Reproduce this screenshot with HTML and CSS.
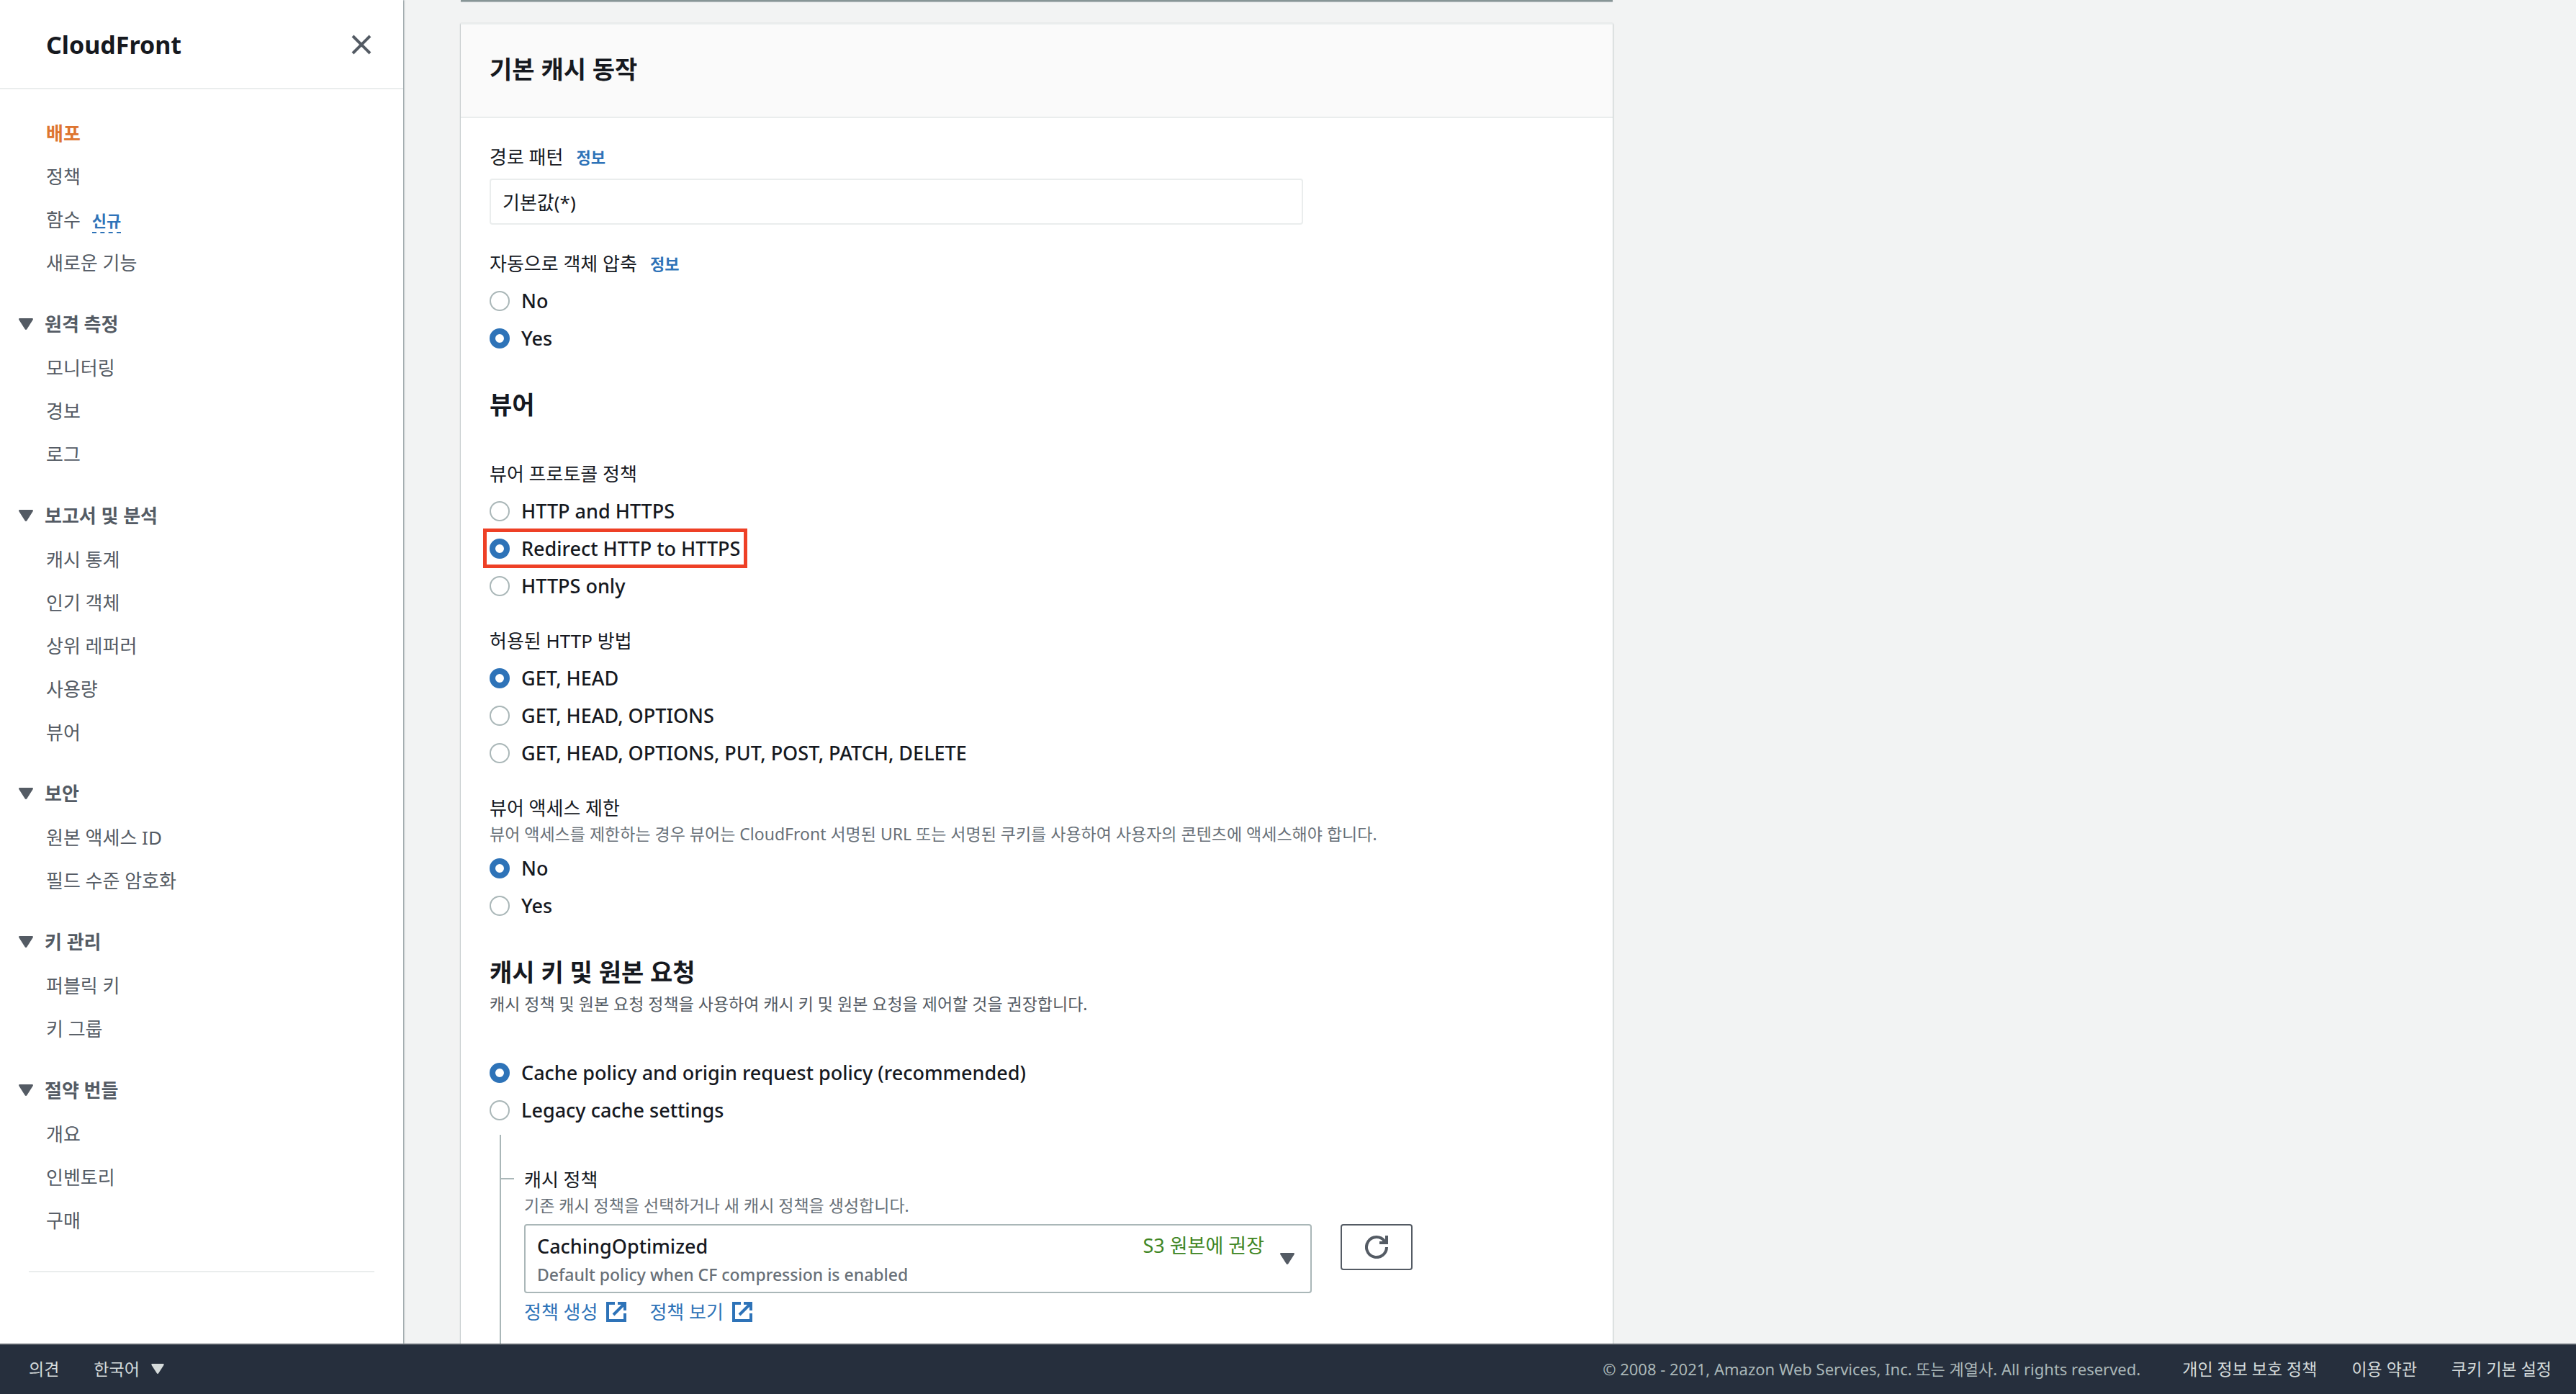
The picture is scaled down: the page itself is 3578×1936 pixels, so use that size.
FILE: index.html
```html
<!DOCTYPE html>
<html lang="ko">
<head>
<meta charset="utf-8">
<meta name="viewport" content="width=device-width, initial-scale=1">
<title>CloudFront</title>
<link rel="stylesheet" href="styles.css">
</head>
<body>
<svg class="sprite" aria-hidden="true">
  <symbol id="caret" viewBox="0 0 20 16"><path d="M1.500 0h17c1.300 0 1.800 1.200 1.100 2.200l-8.300 13c-.6 1-2 1-2.600 0l-8.300-13C-.3 1.200.2 0 1.500 0z" fill="currentColor"/></symbol>
  <symbol id="external" viewBox="0 0 28 28"><path d="M12 2H2v24h24V16M16 2h10v10M25 3 10 18" fill="none" stroke="currentColor" stroke-width="4"/></symbol>
</svg>
<div class="app">
  <aside class="sidebar">
    <header class="sidebar-head">
      <h1 class="service">CloudFront</h1>
      <button class="close" type="button" aria-label="닫기"><svg width="28" height="28" viewBox="0 0 28 28"><path d="M2 2 26 26M26 2 2 26" stroke="currentColor" stroke-width="4"/></svg></button>
    </header>
    <nav class="nav">
      <ul class="links">
        <li><a class="active" href="#">배포</a></li>
        <li><a href="#">정책</a></li>
        <li><a href="#">함수</a><button class="badge" type="button">신규</button></li>
        <li><a href="#">새로운 기능</a></li>
      </ul>
      <button class="group" type="button"><svg class="caret"><use href="#caret"/></svg>원격 측정</button>
      <ul class="links">
        <li><a href="#">모니터링</a></li>
        <li><a href="#">경보</a></li>
        <li><a href="#">로그</a></li>
      </ul>
      <button class="group" type="button"><svg class="caret"><use href="#caret"/></svg>보고서 및 분석</button>
      <ul class="links">
        <li><a href="#">캐시 통계</a></li>
        <li><a href="#">인기 객체</a></li>
        <li><a href="#">상위 레퍼러</a></li>
        <li><a href="#">사용량</a></li>
        <li><a href="#">뷰어</a></li>
      </ul>
      <button class="group" type="button"><svg class="caret"><use href="#caret"/></svg>보안</button>
      <ul class="links">
        <li><a href="#">원본 액세스 ID</a></li>
        <li><a href="#">필드 수준 암호화</a></li>
      </ul>
      <button class="group" type="button"><svg class="caret"><use href="#caret"/></svg>키 관리</button>
      <ul class="links">
        <li><a href="#">퍼블릭 키</a></li>
        <li><a href="#">키 그룹</a></li>
      </ul>
      <button class="group" type="button"><svg class="caret"><use href="#caret"/></svg>절약 번들</button>
      <ul class="links">
        <li><a href="#">개요</a></li>
        <li><a href="#">인벤토리</a></li>
        <li><a href="#">구매</a></li>
      </ul>
      <hr class="rule">
    </nav>
  </aside>

  <main class="main">
    <div class="card-end"></div>
    <section class="card">
      <header class="card-head"><h2 class="heading">기본 캐시 동작</h2></header>
      <form class="card-body">
        <div class="field text-field">
          <div class="label"><label for="path">경로 패턴</label><a class="info" href="#">정보</a></div>
          <input class="text" id="path" type="text" value="기본값(*)" readonly>
        </div>
        <fieldset class="field">
          <legend class="label">자동으로 객체 압축<a class="info" href="#">정보</a></legend>
          <div class="radios">
            <label><input type="radio" name="compress"><span>No</span></label>
            <label><input type="radio" name="compress" checked><span>Yes</span></label>
          </div>
        </fieldset>

        <h3 class="heading sub">뷰어</h3>
        <fieldset class="field after-heading">
          <legend class="label">뷰어 프로토콜 정책</legend>
          <div class="radios">
            <label><input type="radio" name="protocol"><span>HTTP and HTTPS</span></label>
            <label class="marked"><input type="radio" name="protocol" checked><span>Redirect HTTP to HTTPS</span></label>
            <label><input type="radio" name="protocol"><span>HTTPS only</span></label>
          </div>
        </fieldset>
        <fieldset class="field">
          <legend class="label">허용된 HTTP 방법</legend>
          <div class="radios">
            <label><input type="radio" name="methods" checked><span>GET, HEAD</span></label>
            <label><input type="radio" name="methods"><span>GET, HEAD, OPTIONS</span></label>
            <label><input type="radio" name="methods"><span>GET, HEAD, OPTIONS, PUT, POST, PATCH, DELETE</span></label>
          </div>
        </fieldset>
        <fieldset class="field">
          <legend class="label">뷰어 액세스 제한</legend>
          <p class="hint">뷰어 액세스를 제한하는 경우 뷰어는 CloudFront 서명된 URL 또는 서명된 쿠키를 사용하여 사용자의 콘텐츠에 액세스해야 합니다.</p>
          <div class="radios">
            <label><input type="radio" name="restrict" checked><span>No</span></label>
            <label><input type="radio" name="restrict"><span>Yes</span></label>
          </div>
        </fieldset>

        <h3 class="heading sub">캐시 키 및 원본 요청</h3>
        <p class="hint strong">캐시 정책 및 원본 요청 정책을 사용하여 캐시 키 및 원본 요청을 제어할 것을 권장합니다.</p>
        <div class="radios policy-choice">
          <label><input type="radio" name="policy" checked><span>Cache policy and origin request policy (recommended)</span></label>
          <label><input type="radio" name="policy"><span>Legacy cache settings</span></label>
        </div>
        <div class="branch">
          <div class="label branch-label"><label for="cache-policy">캐시 정책</label></div>
          <p class="hint">기존 캐시 정책을 선택하거나 새 캐시 정책을 생성합니다.</p>
          <div class="policy-row">
            <div class="picker">
              <select id="cache-policy" aria-describedby="policy-note"><option>CachingOptimized</option></select>
              <span class="picker-note" id="policy-note">Default policy when CF compression is enabled</span>
              <span class="picker-tag">S3 원본에 권장</span>
              <svg class="caret picker-caret"><use href="#caret"/></svg>
            </div>
            <button class="refresh" type="button" aria-label="새로 고침"><svg width="32" height="32" viewBox="0 0 32 32"><path d="M30 16A14 14 0 1 1 27 7.400" fill="none" stroke="currentColor" stroke-width="4"/><path d="M28 0h4v12H20V8h4l1-3 3 2z" fill="currentColor"/></svg></button>
          </div>
          <div class="policy-links">
            <a href="#">정책 생성<svg class="ext"><use href="#external"/></svg></a>
            <a href="#">정책 보기<svg class="ext"><use href="#external"/></svg></a>
          </div>
        </div>
      </form>
    </section>
  </main>
</div>

<footer class="footer">
  <a href="#">의견</a>
  <div class="language">
    <select aria-label="언어"><option>한국어</option></select>
    <svg class="caret"><use href="#caret"/></svg>
  </div>
  <span class="copyright">© 2008 - 2021, Amazon Web Services, Inc. 또는 계열사. All rights reserved.</span>
  <nav class="legal">
    <a href="#">개인 정보 보호 정책</a>
    <a href="#">이용 약관</a>
    <a href="#">쿠키 기본 설정</a>
  </nav>
</footer>
</body>
</html>
```
FILE: styles.css
```css
:root {
  --ink: #16191f;
  --slate: #545b64;
  --muted: #687078;
  --line: #aab7b8;
  --soft: #eaeded;
  --blue: #2e73b8;
  --font: "Noto Sans", "Noto Sans CJK KR", sans-serif;
}

* { box-sizing: border-box; }

body {
  margin: 0;
  min-height: 100vh;
  display: flex;
  flex-direction: column;
  background: #f2f3f3;
  color: var(--ink);
  font-family: var(--font);
  font-size: 26px;
  line-height: 36px;
}

a { color: inherit; text-decoration: none; }
button, input, select { font: inherit; color: inherit; }
button { padding: 0; border: 0; background: none; cursor: pointer; }
h1, h2, h3, p, ul, fieldset { margin: 0; padding: 0; }
ul { list-style: none; }
fieldset { border: 0; min-width: 0; }
svg { display: block; flex: none; }

.sprite { position: absolute; width: 0; height: 0; }
.caret { width: 20px; height: 16px; color: var(--slate); }

.app { flex: 1; display: flex; }

/* Side navigation */
.sidebar {
  flex: none;
  width: 560px;
  background: #fff;
  color: var(--slate);
  box-shadow: 1px 0 2px rgba(0, 28, 36, .5);
}
.sidebar-head {
  display: flex;
  align-items: center;
  justify-content: space-between;
  height: 124px;
  padding: 2px 44px 0 64px;
  border-bottom: 2px solid var(--soft);
}
.service { color: var(--ink); font-size: 34px; line-height: 44px; }
.nav { padding-top: 31px; }
.links li { display: flex; align-items: center; gap: 16px; height: 60px; padding-left: 64px; }
.active { color: #de7530; font-weight: 700; }
.badge {
  margin-top: 4px;
  border-bottom: 2px dashed var(--blue);
  color: var(--blue);
  font-size: 22px;
  font-weight: 700;
  line-height: 32px;
}
.group {
  display: flex;
  align-items: center;
  gap: 16px;
  height: 62px;
  margin-top: 24px;
  padding-left: 26px;
  font-weight: 700;
}
.rule { margin: 40px 40px 0; border: 0; border-top: 2px solid var(--soft); }

/* Content */
.main { flex: 1; display: flex; flex-direction: column; padding: 0 80px; }
.card-end { width: 100%; max-width: 1600px; height: 2px; background: #879596; box-shadow: 0 1px 1px rgba(0, 28, 36, .3); }
.card {
  flex: 1;
  display: flex;
  flex-direction: column;
  width: 100%;
  max-width: 1600px;
  margin-top: 30px;
  border-top: 2px solid var(--soft);
  background: #fff;
  box-shadow: 0 1px 2px rgba(0, 28, 36, .5);
}
.card-head { padding: 40px 40px 44px; border-bottom: 2px solid var(--soft); background: #fafafa; }
.heading { font-size: 34px; line-height: 44px; }
.card-body { flex: 1; display: flex; flex-direction: column; padding: 4px 40px 0; }
.field { margin-top: 32px; }
.text-field { max-width: 1130px; padding-bottom: 4px; }
.label { display: flex; align-items: center; gap: 18px; padding: 0; }
.info { color: var(--blue); font-size: 22px; font-weight: 700; }
.text {
  display: block;
  width: 100%;
  height: 64px;
  margin-top: 12px;
  padding: 0 16px;
  border: 2px solid var(--soft);
  border-radius: 4px;
  background: #fff;
}
.radios { display: flex; flex-direction: column; align-items: flex-start; margin-top: 8px; font-size: 27px; font-weight: 500; }
.radios label { position: relative; display: flex; align-items: center; gap: 16px; height: 52px; }
.radios input {
  appearance: none;
  width: 28px;
  height: 28px;
  margin: 0;
  border: 2px solid var(--line);
  border-radius: 50%;
  background: #fff;
}
.radios input:checked { border: 8px solid var(--blue); }
.marked::after {
  content: "";
  position: absolute;
  inset: -2px -10px -1px -9px;
  border: 5px solid #ee4026;
}
.sub { margin-top: 44px; }
.after-heading { margin-top: 56px; }
.hint { color: var(--muted); font-size: 23px; }
.hint + .radios { margin-top: 4px; }
.strong { margin-top: 4px; color: var(--slate); }
.hint + .policy-choice { margin-top: 52px; }

.branch {
  flex: 1;
  margin: 8px 0 0 14px;
  padding: 44px 0 20px 32px;
  border-left: 2px solid var(--line);
}
.branch-label { position: relative; }
.branch-label::before {
  content: "";
  position: absolute;
  top: 16px;
  left: -32px;
  width: 18px;
  height: 2px;
  background: var(--line);
}
.policy-row { display: flex; align-items: flex-start; gap: 40px; margin-top: 8px; }
.picker { position: relative; flex: 1; max-width: 1094px; }
.picker select {
  appearance: none;
  display: block;
  width: 100%;
  height: 96px;
  padding: 0 16px 34px;
  border: 2px solid var(--line);
  border-radius: 4px;
  background: #fff;
  font-size: 27px;
  font-weight: 500;
}
.picker-note { position: absolute; left: 18px; bottom: 8px; color: var(--muted); font-size: 23px; font-weight: 500; pointer-events: none; }
.picker-tag { position: absolute; right: 66px; top: 12px; color: #3f8624; font-size: 27px; pointer-events: none; }
.picker-caret { position: absolute; right: 24px; top: 40px; pointer-events: none; }
.refresh {
  display: grid;
  place-items: center;
  width: 100px;
  height: 64px;
  border: 2px solid var(--slate);
  border-radius: 4px;
  color: var(--slate);
}
.policy-links { display: flex; gap: 32px; margin-top: 8px; color: var(--blue); }
.policy-links a { display: flex; align-items: center; gap: 12px; }
.ext { width: 28px; height: 28px; }

/* Footer */
.footer {
  display: flex;
  align-items: center;
  height: 70px;
  padding: 0 34px 2px 40px;
  border-top: 2px solid var(--slate);
  background: #262f3d;
  color: #d5dbdb;
  font-size: 23px;
}
.language { display: flex; align-items: center; gap: 16px; margin-left: 48px; }
.language select { appearance: none; padding: 0; border: 0; background: none; }
.language .caret { width: 18px; height: 14px; color: inherit; }
.copyright { margin-left: auto; color: #aab7b8; font-size: 22px; }
.legal { display: flex; gap: 48px; margin-left: 58px; }
```
